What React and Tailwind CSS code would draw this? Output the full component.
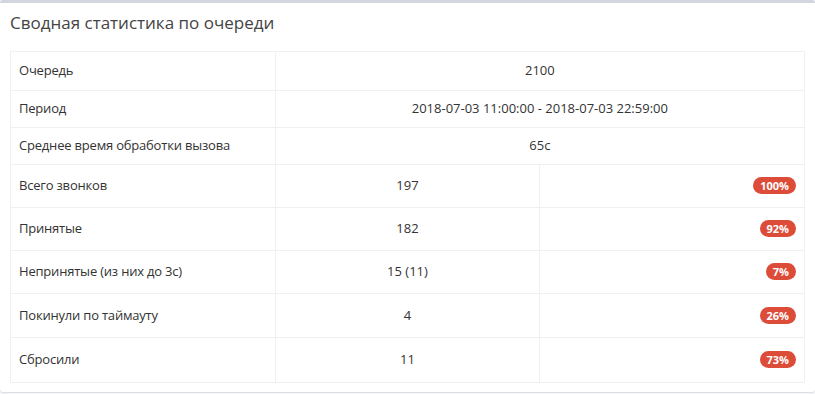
const rows = [
  { label: "Всего звонков", value: "197", pct: "100%", h: "h-[43px]" },
  { label: "Принятые", value: "182", pct: "92%", h: "h-[43px]" },
  { label: "Непринятые (из них до 3с)", value: "15 (11)", pct: "7%", h: "h-[43px]" },
  { label: "Покинули по таймауту", value: "4", pct: "26%", h: "h-[44px]" },
  { label: "Сбросили", value: "11", pct: "73%", h: "h-[45px]" },
];

export default function App() {
  return (
    <div
      className="min-h-screen bg-[#f4f6f9] text-[13px] text-[#333]"
      style={{ fontFamily: '"Open Sans", "Noto Sans", sans-serif' }}
    >
      <div className="rounded-[3px] border-t-[3px] border-[#d2d6de] bg-white shadow-[0_1px_1px_rgba(0,0,0,0.1)]">
        <div className="px-[10px] pt-[9px] pb-[18px]">
          <h3 className="text-[17px] leading-[21px] text-[#444]">Сводная статистика по очереди</h3>
        </div>
        <div className="px-[10px] pb-[9px]">
          <table className="w-full table-fixed border-collapse border border-[#f0f0f0]">
            <tbody>
              <tr>
                <td className="h-[39px] border border-[#f0f0f0] px-[8px] tracking-[-0.2px]">Очередь</td>
                <td colSpan={2} className="border border-[#f0f0f0] px-[8px] text-center">2100</td>
              </tr>
              <tr>
                <td className="h-[37px] border border-[#f0f0f0] px-[8px] tracking-[-0.2px]">Период</td>
                <td colSpan={2} className="border border-[#f0f0f0] px-[8px] text-center">
                  2018-07-03 11:00:00 - 2018-07-03 22:59:00
                </td>
              </tr>
              <tr>
                <td className="h-[37px] border border-[#f0f0f0] px-[8px] tracking-[-0.2px]">Среднее время обработки вызова</td>
                <td colSpan={2} className="border border-[#f0f0f0] px-[8px] text-center">65с</td>
              </tr>
              {rows.map((r) => (
                <tr key={r.label}>
                  <td className={`${r.h} border border-[#f0f0f0] px-[8px] tracking-[-0.2px]`}>{r.label}</td>
                  <td className="border border-[#f0f0f0] px-[8px] text-center">{r.value}</td>
                  <td className="border border-[#f0f0f0] px-[8px] text-right">
                    <span className="inline-block rounded-full bg-[#dd4b39] px-[7px] text-[11px] leading-[17px] font-bold text-white">
                      {r.pct}
                    </span>
                  </td>
                </tr>
              ))}
            </tbody>
          </table>
        </div>
      </div>
    </div>
  );
}
